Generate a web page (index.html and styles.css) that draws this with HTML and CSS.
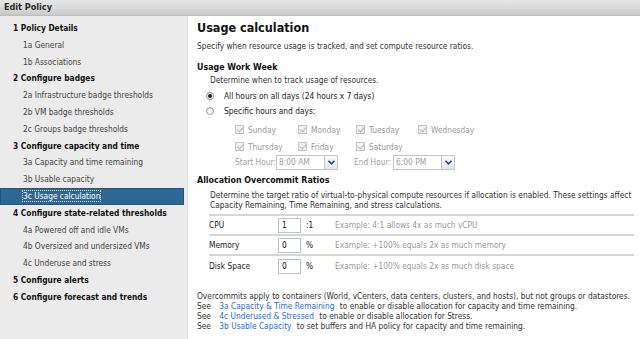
FILE: index.html
```html
<!DOCTYPE html>
<html>
<head>
<meta charset="utf-8">
<link rel="stylesheet" href="styles.css">
</head>
<body>
<div class="window">
  <div class="titlebar">Edit Policy</div>
  <div class="main">
    <nav class="nav">
      <div class="nav-h">1 Policy Details</div>
      <div class="nav-s">1a General</div>
      <div class="nav-s">1b Associations</div>
      <div class="nav-h">2 Configure badges</div>
      <div class="nav-s">2a Infrastructure badge thresholds</div>
      <div class="nav-s">2b VM badge thresholds</div>
      <div class="nav-s">2c Groups badge thresholds</div>
      <div class="nav-h">3 Configure capacity and time</div>
      <div class="nav-s">3a Capacity and time remaining</div>
      <div class="nav-s">3b Usable capacity</div>
      <div class="nav-s active"><span class="focus">3c Usage calculation</span></div>
      <div class="nav-h">4 Configure state-related thresholds</div>
      <div class="nav-s">4a Powered off and idle VMs</div>
      <div class="nav-s">4b Oversized and undersized VMs</div>
      <div class="nav-s">4c Underuse and stress</div>
      <div class="nav-h">5 Configure alerts</div>
      <div class="nav-h">6 Configure forecast and trends</div>
    </nav>
    <section class="content">
      <h1 class="title">Usage calculation</h1>
      <p class="subtitle">Specify when resource usage is tracked, and set compute resource ratios.</p>

      <h2 class="sect">Usage Work Week</h2>
      <p class="desc">Determine when to track usage of resources.</p>
      <div class="radio-row first"><span class="radio checked"></span>All hours on all days (24 hours x 7 days)</div>
      <div class="radio-row"><span class="radio"></span>Specific hours and days:</div>
      <div class="days">
        <div class="day"><span class="cb"></span>Sunday</div>
        <div class="day"><span class="cb"></span>Monday</div>
        <div class="day"><span class="cb"></span>Tuesday</div>
        <div class="day"><span class="cb"></span>Wednesday</div>
        <div class="day"><span class="cb"></span>Thursday</div>
        <div class="day"><span class="cb"></span>Friday</div>
        <div class="day"><span class="cb"></span>Saturday</div>
      </div>
      <div class="hours">
        <span class="hlabel">Start Hour:</span>
        <span class="select"><span class="sel-val">8:00 AM</span><span class="sel-btn"><svg width="7" height="5" viewBox="0 0 7 5"><path d="M0.5 0.8 L3.5 3.8 L6.5 0.8" fill="none" stroke="#2c4f86" stroke-width="1.6"/></svg></span></span>
        <span class="hlabel end">End Hour:</span>
        <span class="select"><span class="sel-val">6:00 PM</span><span class="sel-btn"><svg width="7" height="5" viewBox="0 0 7 5"><path d="M0.5 0.8 L3.5 3.8 L6.5 0.8" fill="none" stroke="#2c4f86" stroke-width="1.6"/></svg></span></span>
      </div>

      <h2 class="sect alloc">Allocation Overcommit Ratios</h2>
      <p class="desc alloc-desc">Determine the target ratio of virtual-to-physical compute resources if allocation is enabled. These settings affect Capacity Remaining, Time Remaining, and stress calculations.</p>
      <div class="ratios">
        <div class="ratio-row">
          <span class="rlabel">CPU</span><span class="input">1</span><span class="suffix">:1</span><span class="example">Example: 4:1 allows 4x as much vCPU</span>
        </div>
        <div class="ratio-row">
          <span class="rlabel">Memory</span><span class="input">0</span><span class="suffix">%</span><span class="example">Example: +100% equals 2x as much memory</span>
        </div>
        <div class="ratio-row last">
          <span class="rlabel">Disk Space</span><span class="input">0</span><span class="suffix">%</span><span class="example">Example: +100% equals 2x as much disk space</span>
        </div>
      </div>

      <div class="notes">
        <p>Overcommits apply to containers (World, vCenters, data centers, clusters, and hosts), but not groups or datastores.</p>
        <p>See <a class="link">3a Capacity &amp; Time Remaining</a> to enable or disable allocation for capacity and time remaining.</p>
        <p>See <a class="link">4c Underused &amp; Stressed</a> to enable or disable allocation for Stress.</p>
        <p>See <a class="link">3b Usable Capacity</a> to set buffers and HA policy for capacity and time remaining.</p>
      </div>
    </section>
  </div>
</div>
</body>
</html>
```
FILE: styles.css
```css
* { box-sizing: border-box; }
html, body { margin: 0; padding: 0; background: #fff; }
body {
  width: 640px;
  height: 339px;
  overflow: hidden;
  font-family: "DejaVu Sans Condensed", "DejaVu Sans", sans-serif;
  font-size: 8.3px;
  color: #222;
}
p { margin: 0; }
h1, h2 { margin: 0; }

.window { display: flex; flex-direction: column; height: 339px; }

.titlebar {
  height: 16px;
  line-height: 15px;
  padding-left: 4px;
  font-weight: bold;
  font-size: 9px;
  color: #2a2a2a;
  background: linear-gradient(#e6e6e6, #d6d6d6 60%, #c9c9c9);
  border-bottom: 1px solid #bdbdbd;
}

.main { display: flex; flex: 1; min-height: 0; }

.nav {
  width: 188px;
  flex: none;
  background: #ebebeb;
  border-right: 1px solid #dcdcdc;
  padding: 4px 3px 0 0;
}
.nav-h, .nav-s {
  height: 16.8px;
  line-height: 16.8px;
  white-space: nowrap;
}
.nav-h { padding-left: 13px; font-weight: bold; color: #111; }
.nav-s { padding-left: 23px; color: #444; }
.nav-s.active {
  background: #2f6794;
  border: 1px solid #245479;
  color: #fff;
  padding-left: 22px;
  line-height: 14.8px;
}
.focus { outline: 1px dotted #c9d8e6; }

.content { flex: 1; padding: 2px 0 0 9px; min-width: 0; }

.title {
  font-size: 12.5px;
  font-weight: bold;
  color: #111;
  line-height: 18px;
  height: 18px;
  margin-top: 1px;
}
.subtitle { line-height: 12px; margin-top: 3px; color: #333; }

.sect {
  font-size: 8.8px;
  font-weight: bold;
  color: #111;
  margin-top: 9px;
  line-height: 12px;
}
.desc { padding-left: 13px; line-height: 10px; margin-top: 2px; color: #333; padding-right: 4px; }

.radio-row {
  display: flex;
  align-items: center;
  height: 15px;
  padding-left: 9px;
  color: #222;
}
.radio-row.first { margin-top: 3px; }
.radio {
  width: 8px; height: 8px;
  border-radius: 50%;
  border: 1px solid #9a9a9a;
  background: linear-gradient(#e8e8e8, #fff);
  margin-right: 10px;
  display: inline-flex;
  align-items: center;
  justify-content: center;
}
.radio.checked::after {
  content: "";
  width: 4px; height: 4px;
  border-radius: 50%;
  background: #222;
}

.days {
  display: grid;
  grid-template-columns: 63px 58px 62px auto;
  row-gap: 4px;
  padding-left: 38px;
  margin-top: 5px;
  color: #9a9a9a;
}
.day { display: flex; align-items: center; height: 13px; }
.cb {
  width: 9px; height: 9px;
  border: 1px solid #c4c4c4;
  background: #f1f1f1;
  margin-right: 4px;
  position: relative;
}
.cb::after {
  content: "";
  position: absolute;
  left: 2px; top: 0px;
  width: 3px; height: 5px;
  border: solid #b7b7b7;
  border-width: 0 1px 1px 0;
  transform: rotate(40deg);
}

.hours {
  display: flex;
  align-items: center;
  padding-left: 38px;
  margin-top: 1px;
  color: #a0a0a0;
  height: 16px;
}
.hlabel { width: 41px; }
.hlabel.end { width: 39px; margin-left: 16px; }
.select {
  display: flex;
  width: 62px;
  height: 15px;
  border: 1px solid #c6c6c6;
  background: #fff;
}
.sel-val { flex: 1; padding-left: 2px; line-height: 13px; color: #a0a0a0; }
.sel-btn {
  width: 13px;
  border-left: 1px solid #c6c6c6;
  background: linear-gradient(#fafafa, #e6e6e6);
  display: flex;
  align-items: center;
  justify-content: center;
}

.sect.alloc { margin-top: 4px; }
.desc.alloc-desc { margin-top: 4px; }

.ratios {
  margin: 4px 6px 0 12px;
  border-top: 2px solid #d6d6d6;
}
.ratio-row {
  display: flex;
  align-items: center;
  height: 20px;
  border-bottom: 2px solid #d6d6d6;
}
.ratio-row.last { border-bottom: none; }
.rlabel { width: 69px; color: #222; }
.input {
  width: 23px;
  height: 15px;
  border: 1px solid #b9c2cf;
  padding-left: 3px;
  line-height: 13px;
  color: #111;
}
.suffix { width: 34px; padding-left: 5px; color: #222; }
.example { color: #9a9a9a; }

.notes { margin-top: 15px; padding-left: 0; }
.notes p { line-height: 10px; color: #333; white-space: nowrap; }
.link { color: #2a6fd6; margin: 0 3px 0 6px; text-decoration: none; }
```
